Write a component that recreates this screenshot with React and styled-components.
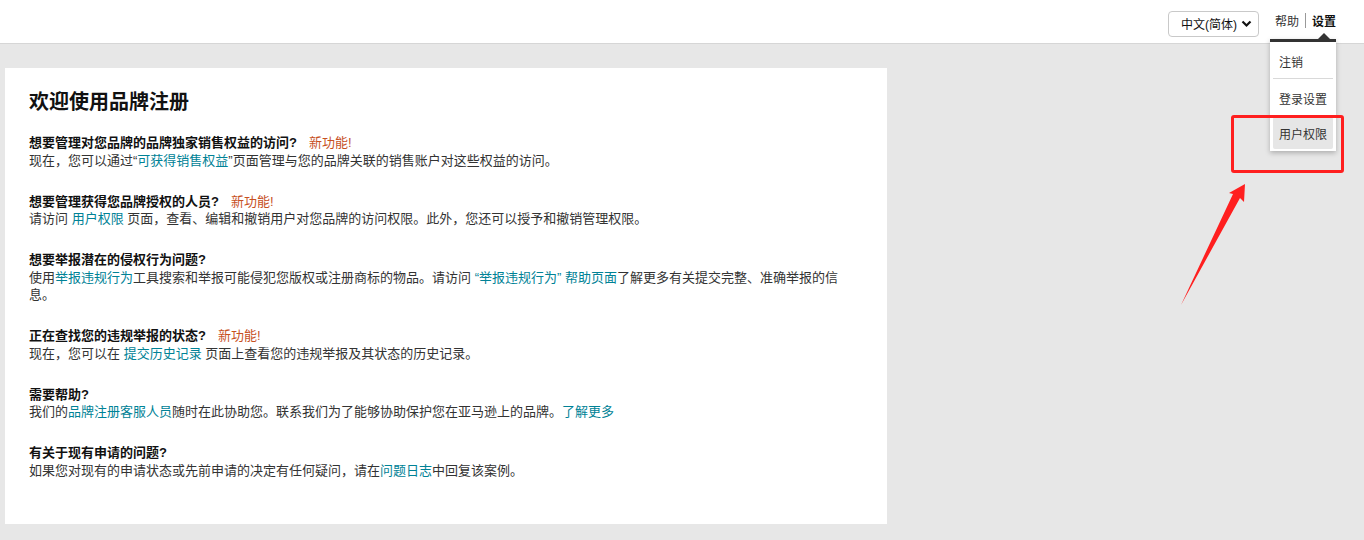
import React from "react";
import styled, { createGlobalStyle } from "styled-components";

const GlobalStyle = createGlobalStyle`
  html, body {
    margin: 0;
    padding: 0;
    background: #e7e7e7;
    font-family: "Liberation Sans", "Noto Sans CJK SC", sans-serif;
    color: #333;
  }
`;

const Page = styled.div`
  position: relative;
  width: 1364px;
  height: 540px;
  overflow: hidden;
`;

const Header = styled.header`
  height: 43px;
  background: #fff;
  border-bottom: 1px solid #d6d6d6;
  display: flex;
  align-items: center;
  justify-content: flex-end;
  padding-right: 28px;
`;

const LangSelect = styled.button`
  display: flex;
  align-items: center;
  justify-content: space-between;
  width: 91px;
  height: 26px;
  margin-right: 16px;
  padding: 0 6px 0 12px;
  border: 1px solid #c9c9c9;
  border-radius: 4px;
  background: #fff;
  font-family: inherit;
  font-size: 12px;
  color: #111;
  white-space: nowrap;
  box-sizing: border-box;
  margin-top: 4px;
`;

const NavLinks = styled.div`
  position: relative;
  display: flex;
  align-items: center;
  font-size: 12px;
  margin-top: -2px;
`;

const NavLink = styled.span`
  color: ${(p) => (p.$active ? "#111" : "#333")};
  font-weight: ${(p) => (p.$active ? 700 : 400)};
`;

const Sep = styled.span`
  width: 1px;
  height: 15px;
  background: #999;
  margin: 0 6px;
`;

const Menu = styled.div`
  position: absolute;
  top: 27px;
  right: 0;
  width: 66px;
  background: #fff;
  border-top: 3px solid #333;
  box-shadow: 0 2px 5px rgba(0, 0, 0, 0.25);
  padding: 3px 3px 2px;
  box-sizing: border-box;
  z-index: 2;

  &::before {
    content: "";
    position: absolute;
    top: -9px;
    right: 6px;
    border: 6px solid transparent;
    border-bottom-color: #333;
    border-top: 0;
  }
`;

const MenuItem = styled.div`
  height: 32px;
  display: flex;
  align-items: center;
  padding-left: 6px;
  font-size: 12px;
  color: #333;
  background: ${(p) => (p.$hover ? "#e6e6e6" : "transparent")};
  border-radius: 2px;

  & + & {
    margin-top: 3px;
  }
`;

const MenuDivider = styled.div`
  height: 1px;
  background: #d9d9d9;
  margin: 1px 0 3px;
`;

const Highlight = styled.div`
  position: absolute;
  left: 1231px;
  top: 115px;
  width: 113px;
  height: 58px;
  border: 3px solid #ff1f1f;
  border-radius: 3px;
  box-sizing: border-box;
  z-index: 3;
`;

const Arrow = styled.svg`
  position: absolute;
  left: 1170px;
  top: 175px;
  z-index: 3;
`;

const Main = styled.main`
  padding: 24px 0 0 5px;
`;

const Card = styled.section`
  width: 882px;
  height: 456px;
  background: #fff;
  padding: 20px 24px 0;
  box-sizing: border-box;
`;

const Title = styled.h1`
  margin: 0 0 17px;
  font-size: 20px;
  line-height: 29px;
  font-weight: 700;
  color: #111;
`;

const Block = styled.div`
  font-size: 13px;
  line-height: 17.5px;
  margin-bottom: 23.5px;
`;

const Question = styled.div`
  font-weight: 700;
  color: #111;
`;

const NewTag = styled.span`
  font-weight: 400;
  color: #c7511f;
  margin-left: 12px;
`;

const Link = styled.a`
  color: #008296;
  text-decoration: none;
`;

const Chevron = () => (
  <svg width="11" height="8" viewBox="0 0 11 8">
    <path d="M1.5 1.5 L5.5 5.5 L9.5 1.5" fill="none" stroke="#111" strokeWidth="2.2" />
  </svg>
);

export default function App() {
  return (
    <Page>
      <GlobalStyle />
      <Header>
        <LangSelect>
          <span>中文(简体)</span>
          <Chevron />
        </LangSelect>
        <NavLinks>
          <NavLink>帮助</NavLink>
          <Sep />
          <NavLink $active>设置</NavLink>
          <Menu>
            <MenuItem>注销</MenuItem>
            <MenuDivider />
            <MenuItem>登录设置</MenuItem>
            <MenuItem $hover>用户权限</MenuItem>
          </Menu>
        </NavLinks>
      </Header>

      <Highlight />
      <Arrow width="90" height="140" viewBox="1170 175 90 140">
        <polygon
          points="1181,305 1233,194 1229,193 1245,184 1244,202 1240,198"
          fill="#ff1f1f"
        />
      </Arrow>

      <Main>
        <Card>
          <Title>欢迎使用品牌注册</Title>

          <Block>
            <Question>
              想要管理对您品牌的品牌独家销售权益的访问?<NewTag>新功能!</NewTag>
            </Question>
            现在，您可以通过“<Link>可获得销售权益</Link>”页面管理与您的品牌关联的销售账户对这些权益的访问。
          </Block>

          <Block>
            <Question>
              想要管理获得您品牌授权的人员?<NewTag>新功能!</NewTag>
            </Question>
            请访问 <Link>用户权限</Link> 页面，查看、编辑和撤销用户对您品牌的访问权限。此外，您还可以授予和撤销管理权限。
          </Block>

          <Block>
            <Question>想要举报潜在的侵权行为问题?</Question>
            使用<Link>举报违规行为</Link>工具搜索和举报可能侵犯您版权或注册商标的物品。请访问 <Link>“举报违规行为” 帮助页面</Link>了解更多有关提交完整、准确举报的信息。
          </Block>

          <Block>
            <Question>
              正在查找您的违规举报的状态?<NewTag>新功能!</NewTag>
            </Question>
            现在，您可以在 <Link>提交历史记录</Link> 页面上查看您的违规举报及其状态的历史记录。
          </Block>

          <Block>
            <Question>需要帮助?</Question>
            我们的<Link>品牌注册客服人员</Link>随时在此协助您。联系我们为了能够协助保护您在亚马逊上的品牌。<Link>了解更多</Link>
          </Block>

          <Block>
            <Question>有关于现有申请的问题?</Question>
            如果您对现有的申请状态或先前申请的决定有任何疑问，请在<Link>问题日志</Link>中回复该案例。
          </Block>
        </Card>
      </Main>
    </Page>
  );
}
